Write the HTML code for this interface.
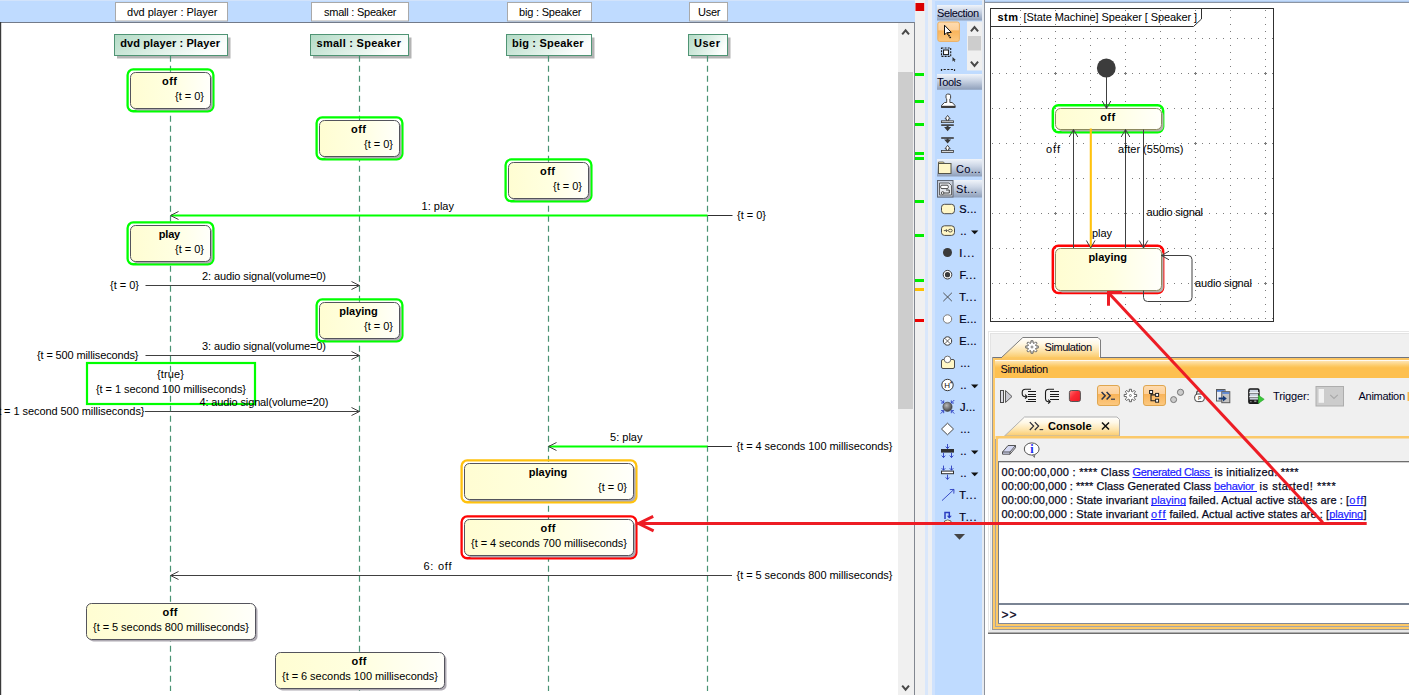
<!DOCTYPE html>
<html><head><meta charset="utf-8"><title>Simulation</title>
<style>html,body{margin:0;padding:0;background:#fff;}body{width:1409px;height:695px;overflow:hidden;font-family:"Liberation Sans",sans-serif;}svg{display:block}text{white-space:pre}</style>
</head><body>
<svg width="1409" height="695" viewBox="0 0 1409 695" font-family="Liberation Sans, sans-serif" font-size="11" fill="#000">
<defs>
<linearGradient id="gState" x1="0" y1="0" x2="1" y2="0"><stop offset="0" stop-color="#fffdd2"/><stop offset="0.5" stop-color="#ffffe0"/><stop offset="1" stop-color="#fffffb"/></linearGradient>
<linearGradient id="gLife" x1="0" y1="0" x2="1" y2="0.35"><stop offset="0" stop-color="#b2dbc5"/><stop offset="1" stop-color="#fcfefd"/></linearGradient>
<linearGradient id="gHdr" x1="0" y1="0" x2="0" y2="1"><stop offset="0" stop-color="#f0f4fa"/><stop offset="0.4" stop-color="#ccd6e6"/><stop offset="1" stop-color="#8e9fba"/></linearGradient>
<linearGradient id="gSel" x1="0" y1="0" x2="0" y2="1"><stop offset="0" stop-color="#fedcb0"/><stop offset="0.42" stop-color="#fdd09a"/><stop offset="0.45" stop-color="#f9b45a"/><stop offset="1" stop-color="#fcc981"/></linearGradient>
<linearGradient id="gTab" x1="0" y1="0" x2="0" y2="1"><stop offset="0" stop-color="#ffffff"/><stop offset="0.3" stop-color="#fff8e6"/><stop offset="0.7" stop-color="#fde2a6"/><stop offset="1" stop-color="#fbcb6c"/></linearGradient>
<linearGradient id="gBand" x1="0" y1="0" x2="0" y2="1"><stop offset="0" stop-color="#fee4b2"/><stop offset="0.3" stop-color="#fdc963"/><stop offset="0.4" stop-color="#fdc050"/><stop offset="1" stop-color="#fdc050"/></linearGradient>
<linearGradient id="gStop" x1="0" y1="0" x2="1" y2="1"><stop offset="0" stop-color="#ff7272"/><stop offset="0.45" stop-color="#fa2a34"/><stop offset="1" stop-color="#ee1822"/></linearGradient>
<radialGradient id="gBall" cx="0.4" cy="0.35" r="0.7"><stop offset="0" stop-color="#b8b8b8"/><stop offset="1" stop-color="#3c3c3c"/></radialGradient>
<pattern id="gridH" x="1020" y="38" width="7" height="35" patternUnits="userSpaceOnUse"><rect x="0" y="0" width="1" height="1" fill="#7c7c7c"/></pattern>
<pattern id="gridV" x="1020" y="38" width="35" height="7" patternUnits="userSpaceOnUse"><rect x="0" y="0" width="1" height="1" fill="#7c7c7c"/></pattern>
</defs>
<rect x="0" y="0" width="1409" height="695" fill="#bfdbff"/>
<rect x="0" y="0" width="985" height="1" fill="#d2e3fb"/>
<rect x="0" y="22" width="898" height="673" fill="#fff"/>
<rect x="0" y="22" width="915" height="1" fill="#737b8a"/>
<rect x="0" y="22" width="1.2" height="673" fill="#3a3a3a"/>
<rect x="115.5" y="2.5" width="112" height="18.5" fill="#fff" stroke="#a9a9a9" stroke-width="1"/>
<text x="127.1" y="15.5" textLength="90.3" lengthAdjust="spacing">dvd player : Player</text>
<rect x="311.5" y="2.5" width="97" height="18.5" fill="#fff" stroke="#a9a9a9" stroke-width="1"/>
<text x="324" y="15.5" textLength="72.5" lengthAdjust="spacing">small : Speaker</text>
<rect x="507.5" y="2.5" width="84" height="18.5" fill="#fff" stroke="#a9a9a9" stroke-width="1"/>
<text x="519" y="15.5" textLength="62.5" lengthAdjust="spacing">big : Speaker</text>
<rect x="689.5" y="2.5" width="38" height="18.5" fill="#fff" stroke="#a9a9a9" stroke-width="1"/>
<text x="698" y="15.5" textLength="22.5" lengthAdjust="spacing">User</text>
<rect x="117" y="37.5" width="113.5" height="21" fill="#b4b4b4"/>
<rect x="114.5" y="34.5" width="113.0" height="21" fill="url(#gLife)" stroke="#4f9474" stroke-width="1"/>
<text x="120.2" y="46.5" font-weight="bold" textLength="99.8" lengthAdjust="spacing">dvd player : Player</text>
<line x1="170.5" y1="55.7" x2="170.5" y2="691" stroke="#4a9373" stroke-width="1.2" stroke-dasharray="6,4"/>
<rect x="313" y="37.5" width="98.5" height="21" fill="#b4b4b4"/>
<rect x="310.5" y="34.5" width="98.0" height="21" fill="url(#gLife)" stroke="#4f9474" stroke-width="1"/>
<text x="316.5" y="46.5" font-weight="bold" textLength="84.5" lengthAdjust="spacing">small : Speaker</text>
<line x1="359.5" y1="55.7" x2="359.5" y2="691" stroke="#4a9373" stroke-width="1.2" stroke-dasharray="6,4"/>
<rect x="509" y="37.5" width="85.5" height="21" fill="#b4b4b4"/>
<rect x="506.5" y="34.5" width="85.0" height="21" fill="url(#gLife)" stroke="#4f9474" stroke-width="1"/>
<text x="512" y="46.5" font-weight="bold" textLength="71.5" lengthAdjust="spacing">big : Speaker</text>
<line x1="548.5" y1="55.7" x2="548.5" y2="691" stroke="#4a9373" stroke-width="1.2" stroke-dasharray="6,4"/>
<rect x="691" y="37.5" width="39.5" height="21" fill="#b4b4b4"/>
<rect x="688.5" y="34.5" width="39.0" height="21" fill="url(#gLife)" stroke="#4f9474" stroke-width="1"/>
<text x="694" y="46.5" font-weight="bold" textLength="26" lengthAdjust="spacing">User</text>
<line x1="707.5" y1="55.7" x2="707.5" y2="691" stroke="#4a9373" stroke-width="1.2" stroke-dasharray="6,4"/>
<line x1="171" y1="215.5" x2="707.5" y2="215.5" stroke="#00ff00" stroke-width="2.2"/>
<line x1="707.5" y1="215.5" x2="732.5" y2="215.5" stroke="#303030" stroke-width="1"/>
<polyline points="178.5,211.5 170.5,215.5 178.5,219.5" fill="none" stroke="#404040" stroke-width="1"/>
<text x="421.5" y="210" textLength="32.5" lengthAdjust="spacing">1: play</text>
<text x="737" y="219" textLength="29" lengthAdjust="spacing">{t = 0}</text>
<line x1="145.5" y1="285.5" x2="359.5" y2="285.5" stroke="#404040" stroke-width="1"/>
<polyline points="351.5,281.5 359.5,285.5 351.5,289.5" fill="none" stroke="#404040" stroke-width="1"/>
<text x="202" y="280" textLength="124" lengthAdjust="spacing">2: audio signal(volume=0)</text>
<text x="110" y="289" textLength="29" lengthAdjust="spacing">{t = 0}</text>
<line x1="145.5" y1="355.5" x2="359.5" y2="355.5" stroke="#404040" stroke-width="1"/>
<polyline points="351.5,351.5 359.5,355.5 351.5,359.5" fill="none" stroke="#404040" stroke-width="1"/>
<text x="202" y="350" textLength="124" lengthAdjust="spacing">3: audio signal(volume=0)</text>
<text x="37" y="359" textLength="101.5" lengthAdjust="spacing">{t = 500 milliseconds}</text>
<rect x="87" y="363" width="168" height="41" fill="none" stroke="#00ff00" stroke-width="2.2"/>
<text x="157" y="378" textLength="27" lengthAdjust="spacing">{true}</text>
<text x="96" y="393" textLength="150" lengthAdjust="spacing">{t = 1 second 100 milliseconds}</text>
<line x1="145" y1="411.5" x2="359.5" y2="411.5" stroke="#404040" stroke-width="1"/>
<polyline points="351.5,407.5 359.5,411.5 351.5,415.5" fill="none" stroke="#404040" stroke-width="1"/>
<text x="199.5" y="406" textLength="129.0" lengthAdjust="spacing">4: audio signal(volume=20)</text>
<text x="-5.5" y="415" textLength="150.0" lengthAdjust="spacing">{t = 1 second 500 milliseconds}</text>
<line x1="549" y1="446.5" x2="707.5" y2="446.5" stroke="#00ff00" stroke-width="2.2"/>
<line x1="707.5" y1="446.5" x2="732" y2="446.5" stroke="#303030" stroke-width="1"/>
<polyline points="556.5,442.5 548.5,446.5 556.5,450.5" fill="none" stroke="#404040" stroke-width="1"/>
<text x="610" y="441" textLength="32.5" lengthAdjust="spacing">5: play</text>
<text x="736.5" y="450" textLength="156.0" lengthAdjust="spacing">{t = 4 seconds 100 milliseconds}</text>
<line x1="170.5" y1="575.5" x2="732" y2="575.5" stroke="#404040" stroke-width="1"/>
<polyline points="178.5,571.5 170.5,575.5 178.5,579.5" fill="none" stroke="#404040" stroke-width="1"/>
<text x="423.5" y="570" textLength="28.0" lengthAdjust="spacing">6: off</text>
<text x="736.5" y="579" textLength="156.0" lengthAdjust="spacing">{t = 5 seconds 800 milliseconds}</text>
<rect x="127.6" y="69.45" width="85.8" height="41.8" rx="5.6" fill="none" stroke="#00ff00" stroke-width="2.3"/>
<rect x="132.5" y="74.5" width="80" height="36" rx="5" fill="#aeaab2"/>
<rect x="130.5" y="72.5" width="80" height="36" rx="5" fill="url(#gState)" stroke="#54545c" stroke-width="1"/>
<text x="162.0" y="85" font-weight="bold" textLength="15.0" lengthAdjust="spacing">off</text>
<text x="175" y="100" textLength="29" lengthAdjust="spacing">{t = 0}</text>
<rect x="316.6" y="117.45" width="85.8" height="41.8" rx="5.6" fill="none" stroke="#00ff00" stroke-width="2.3"/>
<rect x="321.5" y="122.5" width="80" height="36" rx="5" fill="#aeaab2"/>
<rect x="319.5" y="120.5" width="80" height="36" rx="5" fill="url(#gState)" stroke="#54545c" stroke-width="1"/>
<text x="351.0" y="133" font-weight="bold" textLength="15.0" lengthAdjust="spacing">off</text>
<text x="364" y="148" textLength="29" lengthAdjust="spacing">{t = 0}</text>
<rect x="505.6" y="159.45" width="85.8" height="41.8" rx="5.6" fill="none" stroke="#00ff00" stroke-width="2.3"/>
<rect x="510.5" y="164.5" width="80" height="36" rx="5" fill="#aeaab2"/>
<rect x="508.5" y="162.5" width="80" height="36" rx="5" fill="url(#gState)" stroke="#54545c" stroke-width="1"/>
<text x="540.0" y="175" font-weight="bold" textLength="15.0" lengthAdjust="spacing">off</text>
<text x="553" y="190" textLength="29" lengthAdjust="spacing">{t = 0}</text>
<rect x="127.6" y="222.45" width="85.8" height="41.8" rx="5.6" fill="none" stroke="#00ff00" stroke-width="2.3"/>
<rect x="132.5" y="227.5" width="80" height="36" rx="5" fill="#aeaab2"/>
<rect x="130.5" y="225.5" width="80" height="36" rx="5" fill="url(#gState)" stroke="#54545c" stroke-width="1"/>
<text x="158.8" y="238" font-weight="bold" textLength="21.4" lengthAdjust="spacing">play</text>
<text x="175" y="253" textLength="29" lengthAdjust="spacing">{t = 0}</text>
<rect x="316.6" y="299.45" width="85.8" height="41.8" rx="5.6" fill="none" stroke="#00ff00" stroke-width="2.3"/>
<rect x="321.5" y="304.5" width="80" height="36" rx="5" fill="#aeaab2"/>
<rect x="319.5" y="302.5" width="80" height="36" rx="5" fill="url(#gState)" stroke="#54545c" stroke-width="1"/>
<text x="339.25" y="315" font-weight="bold" textLength="38.5" lengthAdjust="spacing">playing</text>
<text x="364" y="330" textLength="29" lengthAdjust="spacing">{t = 0}</text>
<rect x="461.6" y="460.45" width="174.8" height="41.8" rx="5.6" fill="none" stroke="#ffc20e" stroke-width="2.3"/>
<rect x="466.5" y="465.5" width="169" height="36" rx="5" fill="#aeaab2"/>
<rect x="464.5" y="463.5" width="169" height="36" rx="5" fill="url(#gState)" stroke="#54545c" stroke-width="1"/>
<text x="528.75" y="476" font-weight="bold" textLength="38.5" lengthAdjust="spacing">playing</text>
<text x="598" y="491" textLength="29" lengthAdjust="spacing">{t = 0}</text>
<rect x="461.6" y="516.45" width="174.8" height="41.8" rx="5.6" fill="none" stroke="#ff0404" stroke-width="2.3"/>
<rect x="466.5" y="521.5" width="169" height="36" rx="5" fill="#aeaab2"/>
<rect x="464.5" y="519.5" width="169" height="36" rx="5" fill="url(#gState)" stroke="#54545c" stroke-width="1"/>
<text x="540.5" y="532" font-weight="bold" textLength="15.0" lengthAdjust="spacing">off</text>
<text x="471.0" y="547" textLength="156.0" lengthAdjust="spacing">{t = 4 seconds 700 milliseconds}</text>
<rect x="88.5" y="605.5" width="169" height="36" rx="5" fill="#aeaab2"/>
<rect x="86.5" y="603.5" width="169" height="36" rx="5" fill="url(#gState)" stroke="#54545c" stroke-width="1"/>
<text x="162.5" y="616" font-weight="bold" textLength="15.0" lengthAdjust="spacing">off</text>
<text x="93.0" y="631" textLength="156.0" lengthAdjust="spacing">{t = 5 seconds 800 milliseconds}</text>
<rect x="277.5" y="654.5" width="169" height="36" rx="5" fill="#aeaab2"/>
<rect x="275.5" y="652.5" width="169" height="36" rx="5" fill="url(#gState)" stroke="#54545c" stroke-width="1"/>
<text x="351.5" y="665" font-weight="bold" textLength="15.0" lengthAdjust="spacing">off</text>
<text x="282.0" y="680" textLength="156.0" lengthAdjust="spacing">{t = 6 seconds 100 milliseconds}</text>
<rect x="898" y="23" width="16.5" height="672" fill="#f0f0f0"/>
<rect x="898" y="72" width="15" height="337" fill="#cdcdcd"/>
<polyline points="902.2,34.3 905.6,30.3 909,34.3" fill="none" stroke="#484848" stroke-width="2"/>
<polyline points="902.2,685.7 905.6,689.7 909,685.7" fill="none" stroke="#484848" stroke-width="2"/>
<rect x="914" y="22" width="1" height="673" fill="#828790"/>
<rect x="915" y="0" width="10" height="695" fill="#f0f0f0"/>
<rect x="925" y="0" width="3" height="695" fill="#d9e7fb"/>
<rect x="928" y="0" width="4" height="695" fill="#eef0f3"/>
<rect x="932" y="0" width="3" height="695" fill="#cfe2fd"/>
<rect x="915.5" y="3" width="8.7" height="8" fill="#da0000"/>
<rect x="915" y="73" width="9" height="3" fill="#00ee00"/>
<rect x="915" y="100" width="9" height="3" fill="#00ee00"/>
<rect x="915" y="123" width="9" height="3" fill="#00ee00"/>
<rect x="915" y="152" width="9" height="3" fill="#00ee00"/>
<rect x="915" y="157" width="9" height="3" fill="#00ee00"/>
<rect x="915" y="200" width="9" height="3" fill="#00ee00"/>
<rect x="915" y="234" width="9" height="3" fill="#00ee00"/>
<rect x="915" y="279" width="9" height="3" fill="#00ee00"/>
<rect x="915" y="288" width="9" height="3" fill="#ffc000"/>
<rect x="915" y="319" width="9" height="3" fill="#ee0000"/>
<rect x="937" y="5" width="45" height="15.5" fill="url(#gHdr)"/>
<text x="937" y="16.5" fill="#00001c" textLength="42" lengthAdjust="spacing">Selection</text>
<rect x="937.8" y="22" width="21.6" height="19.4" rx="2" fill="url(#gSel)" stroke="#eeb060" stroke-width="1"/>
<path d="M944.5 25.2 L944.5 34.9 L946.7 32.7 L951.3 32.4 Z" fill="#fff" stroke="#111" stroke-width="1" stroke-linejoin="miter"/>
<path d="M947.4 33.4 L950.6 38" fill="none" stroke="#111" stroke-width="1.6" stroke-dasharray="1.5,0.6"/>
<rect x="967" y="21.5" width="15" height="49" fill="#f0f0f0"/>
<rect x="968" y="36" width="13" height="14.5" fill="#cdcdcd"/>
<polyline points="970.9,31.3 974.5,27.1 978.1,31.3" fill="none" stroke="#484848" stroke-width="2"/>
<polyline points="970.9,61.7 974.5,65.9 978.1,61.7" fill="none" stroke="#484848" stroke-width="2"/>
<rect x="941.5" y="48" width="9.2" height="8.4" fill="none" stroke="#1a1a1a" stroke-width="1.1" stroke-dasharray="2,1.1"/>
<rect x="943.5" y="50" width="5" height="4.6" fill="#fff" stroke="#222" stroke-width="1.1"/>
<path d="M952.5 57 L952.5 61.5 L953.8 60.5 L954.6 62 L955.2 61.6 L954.5 60.2 L955.8 60 Z" fill="#333"/>
<path d="M941.5 71 v-1.5 h13 v1.5" fill="none" stroke="#222" stroke-width="1.2" stroke-dasharray="2.2,1.4"/>
<rect x="937" y="74" width="45" height="15.75" fill="url(#gHdr)"/>
<text x="937" y="85.5" fill="#00001c" textLength="24.5" lengthAdjust="spacing">Tools</text>
<path d="M946 98.3 v-2.6 a1.6 1.6 0 0 1 1.6 -1.6 h1.4 a1.6 1.6 0 0 1 1.6 1.6 v2.6 l-0.7 0.6 v3.6 h2.2 l3 2.9 v2.1 h-13.6 v-2.1 l3 -2.9 h2.2 v-3.6 Z" fill="#fff" stroke="#444" stroke-width="1" stroke-linejoin="round"/>
<rect x="941.2" y="105.8" width="14" height="2" fill="#3c3c3c"/>
<path d="M947.6 115.4 l2.6 3.5 h-1.6 v2 h-2 v-2 h-1.6 Z" fill="#fff" stroke="#3a3a3a" stroke-width="0.9" stroke-linejoin="round"/>
<rect x="941.5" y="120.8" width="12" height="1.8" fill="#d8d8d8" stroke="#3a3a3a" stroke-width="0.8"/>
<rect x="941.2" y="124.3" width="12.6" height="1.6" fill="#3a3a3a"/>
<path d="M947.6 131.2 l-3.5 -4.2 h2.5 v-1 h2 v1 h2.5 Z" fill="#3a3a3a"/>
<rect x="941.2" y="137.2" width="12.6" height="1.6" fill="#3a3a3a"/>
<path d="M947.6 143.6 l-3.5 -4.2 h2.5 v-1 h2 v1 h2.5 Z" fill="#3a3a3a"/>
<path d="M947.6 145.3 l2.6 3.5 h-1.6 v2 h-2 v-2 h-1.6 Z" fill="#fff" stroke="#3a3a3a" stroke-width="0.9" stroke-linejoin="round"/>
<rect x="941.5" y="150.5" width="12" height="2" fill="#d8d8d8" stroke="#3a3a3a" stroke-width="0.8"/>
<rect x="937" y="159" width="45" height="17.5" fill="url(#gHdr)"/>
<path d="M938.5 163.5 v-1.5 h5 l1 1.5 Z" fill="#f6e7a6" stroke="#55554a" stroke-width="0.8"/>
<rect x="938.5" y="163.5" width="12.5" height="10" fill="#fff7c8" stroke="#55554a" stroke-width="1"/>
<text x="956" y="172.5" fill="#00001c" textLength="24.5" lengthAdjust="spacing">Co...</text>
<rect x="937" y="180" width="45" height="17.5" fill="url(#gHdr)"/>
<rect x="937.5" y="180.5" width="15.5" height="16.5" fill="#c9d0dc" stroke="#5f6673" stroke-width="1"/>
<path d="M939.5 183 h9.5 l2.5 2.5 v9.5 h-12 Z" fill="#e4e7ec" stroke="#555" stroke-width="0.9"/>
<rect x="940.7" y="185.2" width="7.6" height="3.4" rx="1.2" fill="#fff" stroke="#333" stroke-width="0.9"/>
<path d="M946 190 h3.3 v3 h-6.3 v-1.4" fill="none" stroke="#333" stroke-width="0.9"/>
<circle cx="942.6" cy="193" r="1.3" fill="#fff" stroke="#333" stroke-width="0.8"/>
<text x="956" y="193" fill="#00001c" textLength="21" lengthAdjust="spacing">St...</text>
<rect x="941.5" y="204.3" width="13" height="9.4" rx="3" fill="#fff7c6" stroke="#4a4a4a" stroke-width="1"/>
<text x="959.3" y="213" fill="#00001c" textLength="17.2" lengthAdjust="spacing" stroke="#00001c" stroke-width="0.22">S...</text>
<rect x="941.5" y="225.8" width="13" height="9.6" rx="3" fill="#fff7c6" stroke="#4a4a4a" stroke-width="1"/>
<path d="M943.8 230.6 h3.4 m-1.2 -1.4 l1.4 1.4 l-1.4 1.4" fill="none" stroke="#333" stroke-width="0.8"/>
<ellipse cx="950.3" cy="230.6" rx="1.9" ry="1.4" fill="none" stroke="#333" stroke-width="0.8"/>
<text x="960.2" y="235" fill="#00001c" textLength="6.4" lengthAdjust="spacing" stroke="#00001c" stroke-width="0.22">..</text>
<path d="M971 230.5 h7.4 l-3.7 3.8 Z" fill="#111"/>
<circle cx="947.5" cy="252.5" r="4.5" fill="#3a3a3a"/>
<text x="959.3" y="257" fill="#00001c" textLength="15.0" lengthAdjust="spacing" stroke="#00001c" stroke-width="0.22">I...</text>
<circle cx="947.5" cy="274.7" r="4.3" fill="#fff" stroke="#3a3a3a" stroke-width="1"/>
<circle cx="947.5" cy="274.7" r="2.6" fill="#3a3a3a"/>
<text x="959.5" y="279" fill="#00001c" textLength="16.5" lengthAdjust="spacing" stroke="#00001c" stroke-width="0.22">F...</text>
<path d="M943.3 292.8 l8.6 8.4 m0 -8.4 l-8.6 8.4" fill="none" stroke="#444" stroke-width="0.9"/>
<text x="959.3" y="301" fill="#00001c" textLength="17.2" lengthAdjust="spacing" stroke="#00001c" stroke-width="0.22">T...</text>
<circle cx="947.5" cy="319" r="4.2" fill="#fff" stroke="#7a7a7a" stroke-width="1"/>
<text x="959.3" y="323" fill="#00001c" textLength="17.2" lengthAdjust="spacing" stroke="#00001c" stroke-width="0.22">E...</text>
<circle cx="947.5" cy="341" r="4.2" fill="#fff" stroke="#3a3a3a" stroke-width="1"/>
<path d="M944.6 338.1 l5.8 5.8 m0 -5.8 l-5.8 5.8" fill="none" stroke="#3a3a3a" stroke-width="0.8"/>
<text x="959.3" y="345" fill="#00001c" textLength="17.2" lengthAdjust="spacing" stroke="#00001c" stroke-width="0.22">E...</text>
<rect x="941.5" y="359.5" width="13" height="9" rx="1.5" fill="#fff7c6" stroke="#4a4a4a" stroke-width="1"/>
<circle cx="947.5" cy="359.4" r="3.3" fill="#fff" stroke="#707070" stroke-width="1"/>
<text x="960.3" y="367" fill="#00001c" textLength="9.7" lengthAdjust="spacing" stroke="#00001c" stroke-width="0.22">...</text>
<circle cx="947.5" cy="385" r="5.7" fill="#fff" stroke="#3a3a3a" stroke-width="1"/>
<text x="944.3" y="388" font-size="8" fill="#111">H</text>
<text x="949.8" y="385.5" font-size="7" fill="#111">*</text>
<text x="960.2" y="389" fill="#00001c" textLength="6.4" lengthAdjust="spacing" stroke="#00001c" stroke-width="0.22">..</text>
<path d="M971 384.5 h7.4 l-3.7 3.8 Z" fill="#111"/>
<circle cx="947.5" cy="406.8" r="4.6" fill="url(#gBall)" stroke="#333" stroke-width="0.6"/>
<path d="M940.7 400.0 L943.7 403.0 M941.1 403.0 L943.7 403.0 L943.7 400.4" fill="none" stroke="#2a3cc0" stroke-width="0.9"/>
<path d="M954.3 400.0 L951.3 403.0 M953.9 403.0 L951.3 403.0 L951.3 400.4" fill="none" stroke="#2a3cc0" stroke-width="0.9"/>
<path d="M940.7 413.6 L943.7 410.6 M941.1 410.6 L943.7 410.6 L943.7 413.20000000000005" fill="none" stroke="#2a3cc0" stroke-width="0.9"/>
<path d="M954.3 413.6 L951.3 410.6 M953.9 410.6 L951.3 410.6 L951.3 413.20000000000005" fill="none" stroke="#2a3cc0" stroke-width="0.9"/>
<text x="960" y="411" fill="#00001c" textLength="15.3" lengthAdjust="spacing" stroke="#00001c" stroke-width="0.22">J...</text>
<path d="M947.5 423.2 l6 5.8 l-6 5.8 l-6 -5.8 Z" fill="#fff" stroke="#4a4a4a" stroke-width="1"/>
<text x="960.3" y="433" fill="#00001c" textLength="9.7" lengthAdjust="spacing" stroke="#00001c" stroke-width="0.22">...</text>
<rect x="941" y="449" width="13" height="3.6" fill="#303030"/>
<path d="M947.5 444 L947.5 448.6 M945.7 446.6 L947.5 448.6 L949.3 446.6" fill="none" stroke="#2a3cc0" stroke-width="0.9"/>
<path d="M943.5 452.8 L943.5 457.6 M941.7 455.6 L943.5 457.6 L945.3 455.6" fill="none" stroke="#2a3cc0" stroke-width="0.9"/>
<path d="M951.5 452.8 L951.5 457.6 M949.7 455.6 L951.5 457.6 L953.3 455.6" fill="none" stroke="#2a3cc0" stroke-width="0.9"/>
<text x="960.2" y="455" fill="#00001c" textLength="6.4" lengthAdjust="spacing" stroke="#00001c" stroke-width="0.22">..</text>
<path d="M971 450.5 h7.4 l-3.7 3.8 Z" fill="#111"/>
<rect x="941.5" y="471.1" width="12" height="2.6" fill="#fff" stroke="#303030" stroke-width="1"/>
<path d="M943.5 465.6 L943.5 470.2 M941.7 468.2 L943.5 470.2 L945.3 468.2" fill="none" stroke="#2a3cc0" stroke-width="0.9"/>
<path d="M951.5 465.6 L951.5 470.2 M949.7 468.2 L951.5 470.2 L953.3 468.2" fill="none" stroke="#2a3cc0" stroke-width="0.9"/>
<path d="M947.5 474.6 L947.5 479.4 M945.7 477.4 L947.5 479.4 L949.3 477.4" fill="none" stroke="#2a3cc0" stroke-width="0.9"/>
<text x="960.2" y="477" fill="#00001c" textLength="6.4" lengthAdjust="spacing" stroke="#00001c" stroke-width="0.22">..</text>
<path d="M971 472.5 h7.4 l-3.7 3.8 Z" fill="#111"/>
<path d="M942 500.6 L954 489.4 M949.8 489.6 L954 489.4 L953.8 493.6" fill="none" stroke="#2a3cc0" stroke-width="0.9"/>
<text x="959.3" y="499" fill="#00001c" textLength="17.2" lengthAdjust="spacing" stroke="#00001c" stroke-width="0.22">T...</text>
<path d="M944.5 521 a5 4 0 0 1 6.5 0 v1.5 h-6.5 Z" fill="#fff7c6" stroke="#4a4a4a" stroke-width="0.8"/>
<path d="M945 519 v-6.5 h4.3 v5" fill="none" stroke="#2a3cc0" stroke-width="1.5"/>
<path d="M946.8 515.8 l2.5 2.8 l2.5 -2.8 Z" fill="#2a3cc0"/>
<text x="959.3" y="521" fill="#00001c" textLength="17.2" lengthAdjust="spacing" stroke="#00001c" stroke-width="0.22">T...</text>
<path d="M954 534 h11 l-5.5 5.8 Z" fill="#454545"/>
<rect x="982" y="0" width="2" height="695" fill="#e6ebf2"/>
<rect x="984" y="0" width="1" height="695" fill="#8e939c"/>
<rect x="985" y="2" width="424" height="693" fill="#fff"/>
<rect x="985" y="0" width="424" height="1" fill="#c4dcfb"/>
<rect x="985" y="1" width="424" height="1" fill="#adc8ec"/>
<rect x="984" y="2" width="425" height="1" fill="#8c95a3"/>
<rect x="991" y="9" width="282" height="312" fill="url(#gridH)"/>
<rect x="991" y="9" width="282" height="312" fill="url(#gridV)"/>
<path d="M1054 73.5 h3 M1055.5 72 v3" stroke="#7c7c7c" stroke-width="1" fill="none"/>
<path d="M1054 143.5 h3 M1055.5 142 v3" stroke="#7c7c7c" stroke-width="1" fill="none"/>
<path d="M1054 213.5 h3 M1055.5 212 v3" stroke="#7c7c7c" stroke-width="1" fill="none"/>
<path d="M1054 283.5 h3 M1055.5 282 v3" stroke="#7c7c7c" stroke-width="1" fill="none"/>
<path d="M1124 73.5 h3 M1125.5 72 v3" stroke="#7c7c7c" stroke-width="1" fill="none"/>
<path d="M1124 143.5 h3 M1125.5 142 v3" stroke="#7c7c7c" stroke-width="1" fill="none"/>
<path d="M1124 213.5 h3 M1125.5 212 v3" stroke="#7c7c7c" stroke-width="1" fill="none"/>
<path d="M1124 283.5 h3 M1125.5 282 v3" stroke="#7c7c7c" stroke-width="1" fill="none"/>
<path d="M1194 73.5 h3 M1195.5 72 v3" stroke="#7c7c7c" stroke-width="1" fill="none"/>
<path d="M1194 143.5 h3 M1195.5 142 v3" stroke="#7c7c7c" stroke-width="1" fill="none"/>
<path d="M1194 213.5 h3 M1195.5 212 v3" stroke="#7c7c7c" stroke-width="1" fill="none"/>
<path d="M1194 283.5 h3 M1195.5 282 v3" stroke="#7c7c7c" stroke-width="1" fill="none"/>
<path d="M1264 73.5 h3 M1265.5 72 v3" stroke="#7c7c7c" stroke-width="1" fill="none"/>
<path d="M1264 143.5 h3 M1265.5 142 v3" stroke="#7c7c7c" stroke-width="1" fill="none"/>
<path d="M1264 213.5 h3 M1265.5 212 v3" stroke="#7c7c7c" stroke-width="1" fill="none"/>
<path d="M1264 283.5 h3 M1265.5 282 v3" stroke="#7c7c7c" stroke-width="1" fill="none"/>
<rect x="990.5" y="8.5" width="283" height="313" fill="none" stroke="#303030" stroke-width="1"/>
<path d="M990.5 26.5 H1193.5 L1201.5 19 V8.5" fill="none" stroke="#303030" stroke-width="1"/>
<text x="997.5" y="21" font-weight="bold" textLength="20.5" lengthAdjust="spacing">stm</text>
<text x="1023.5" y="21" textLength="173.5" lengthAdjust="spacing">[State Machine] Speaker [ Speaker ]</text>
<circle cx="1106.3" cy="68" r="9.4" fill="#3c3c3c"/>
<rect x="1052.85" y="105.35" width="110.3" height="27.0" rx="5.5" fill="none" stroke="#00ff00" stroke-width="2.5"/>
<rect x="1057.5" y="110.5" width="106" height="21.0" rx="5" fill="#b4b0ac"/>
<rect x="1055.5" y="108.5" width="106" height="21.0" rx="5" fill="url(#gState)" stroke="#8d8a60" stroke-width="1"/>
<text x="1100.25" y="121" font-weight="bold" textLength="14.8" lengthAdjust="spacing">off</text>
<rect x="1052.85" y="245.65" width="110.3" height="47.29999999999998" rx="5.5" fill="none" stroke="#ff0404" stroke-width="2.5"/>
<rect x="1057.5" y="250.5" width="106" height="42.0" rx="5" fill="#b4b0ac"/>
<rect x="1055.5" y="248.5" width="106" height="42.0" rx="5" fill="url(#gState)" stroke="#8d8a60" stroke-width="1"/>
<text x="1088.4" y="261" font-weight="bold" textLength="38.5" lengthAdjust="spacing">playing</text>
<line x1="1106.5" y1="77" x2="1106.5" y2="108.5" stroke="#404040" stroke-width="1"/>
<polyline points="1102.2,101 1106.5,108.5 1110.8,101" fill="none" stroke="#404040" stroke-width="1"/>
<line x1="1073.5" y1="129.5" x2="1073.5" y2="248" stroke="#404040" stroke-width="1"/>
<polyline points="1069.2,137 1073.5,129.5 1077.8,137" fill="none" stroke="#404040" stroke-width="1"/>
<line x1="1090.8" y1="128.5" x2="1090.8" y2="247" stroke="#ffc20e" stroke-width="2.1"/>
<polyline points="1086.4,240.5 1090.7,248 1095,240.5" fill="none" stroke="#404040" stroke-width="1"/>
<line x1="1125.5" y1="129.5" x2="1125.5" y2="248" stroke="#404040" stroke-width="1"/>
<polyline points="1121.2,137 1125.5,129.5 1129.8,137" fill="none" stroke="#404040" stroke-width="1"/>
<line x1="1143.5" y1="129.5" x2="1143.5" y2="248" stroke="#404040" stroke-width="1"/>
<polyline points="1139.2,240.5 1143.5,248 1147.8,240.5" fill="none" stroke="#404040" stroke-width="1"/>
<path d="M1143.5 290.5 V297.5 a4 4 0 0 0 4 4 H1188 a4 4 0 0 0 4 -4 V259.5 a4 4 0 0 0 -4 -4 H1161.5" fill="none" stroke="#404040" stroke-width="1"/>
<polyline points="1169,251.2 1161.5,255.5 1169,259.8" fill="none" stroke="#404040" stroke-width="1"/>
<text x="1046" y="153" textLength="14" lengthAdjust="spacing">off</text>
<text x="1118" y="153" textLength="65.5" lengthAdjust="spacing">after (550ms)</text>
<text x="1146.5" y="216" textLength="56.5" lengthAdjust="spacing">audio signal</text>
<text x="1092" y="237" textLength="20" lengthAdjust="spacing">play</text>
<text x="1195" y="287" textLength="57" lengthAdjust="spacing">audio signal</text>
<rect x="988" y="331" width="421" height="303" fill="#f0f0f0"/>
<rect x="988" y="331" width="421" height="1" fill="#e6e6e6"/>
<rect x="988" y="332" width="421" height="1" fill="#ffffff"/>
<rect x="990" y="333" width="419" height="1" fill="#e3e3e3"/>
<rect x="988" y="331" width="1" height="303" fill="#e6e6e6"/>
<rect x="989" y="332" width="1" height="301" fill="#ffffff"/>
<rect x="990" y="333" width="1" height="299" fill="#e3e3e3"/>
<path d="M1001.5 357.5 L1022.8 337.5 H1098 L1100.5 340 V357.5 Z" fill="url(#gTab)"/>
<path d="M1099.5 340 V357" fill="none" stroke="#fff" stroke-width="1"/>
<path d="M1001.5 357.5 L1022.8 337.5 H1098 L1100.5 340 V357.5" fill="none" stroke="#7e7e7e" stroke-width="1"/>
<polygon points="1036.08,346.00 1038.21,345.93 1038.21,348.07 1036.08,348.00 1035.59,349.18 1037.14,350.64 1035.64,352.14 1034.18,350.59 1033.00,351.08 1033.07,353.21 1030.93,353.21 1031.00,351.08 1029.82,350.59 1028.36,352.14 1026.86,350.64 1028.41,349.18 1027.92,348.00 1025.79,348.07 1025.79,345.93 1027.92,346.00 1028.41,344.82 1026.86,343.36 1028.36,341.86 1029.82,343.41 1031.00,342.92 1030.93,340.79 1033.07,340.79 1033.00,342.92 1034.18,343.41 1035.64,341.86 1037.14,343.36 1035.59,344.82" fill="#fff" stroke="#505050" stroke-width="0.9" stroke-linejoin="round"/><circle cx="1032" cy="347" r="1" fill="#fff" stroke="#505050" stroke-width="0.7"/>
<text x="1044.5" y="351" fill="#00001c" textLength="47.5" lengthAdjust="spacing">Simulation</text>
<rect x="992" y="357" width="10" height="1" fill="#70747e"/>
<rect x="1100" y="357" width="309" height="1" fill="#70747e"/>
<rect x="1002" y="357" width="98" height="1" fill="#fcc962"/>
<rect x="993" y="358" width="416" height="2" fill="#fbc562"/>
<rect x="995" y="360" width="414" height="1" fill="#fffaf0"/>
<rect x="995" y="361" width="414" height="17" fill="url(#gBand)"/>
<text x="1000.5" y="373" fill="#00001c" textLength="47.5" lengthAdjust="spacing">Simulation</text>
<rect x="1000.5" y="390.5" width="3" height="12" fill="#dcdce4" stroke="#4a4a4a" stroke-width="1"/>
<path d="M1005.5 390.5 L1012 396.5 L1005.5 402.5 Z" fill="#c9c9d2" stroke="#5a5a5a" stroke-width="1"/>
<path d="M1028.3 391.7 h7.6 M1028.3 394.2 h7.6 M1028.3 396.8 h7.6 M1028.3 399.3 h7.6 M1026 401.8 h9.9" stroke="#1a1a1a" stroke-width="1" fill="none" shape-rendering="crispEdges"/>
<path d="M1031 389.3 h-5.6 q-3.2 0 -3.2 3.2 v1 q0 3.2 3.2 3.2 h1.6 m-1.9 -2 l2 2 l-2 2" stroke="#1a1a1a" stroke-width="1.1" fill="none"/>
<path d="M1050.4 391.7 h8.8 M1050.4 394.2 h8.8 M1050.4 396.8 h8.8 M1050.4 399.3 h8.8" stroke="#1a1a1a" stroke-width="1" fill="none" shape-rendering="crispEdges"/>
<path d="M1054 389.3 h-5.3 q-3.2 0 -3.2 3.2 v5.8 q0 3.4 3.2 3.4 h1.4 m-1.9 -2 l2 2 l-2 2" stroke="#1a1a1a" stroke-width="1.1" fill="none"/>
<rect x="1069.4" y="390.5" width="11" height="11" rx="2" fill="url(#gStop)" stroke="#555" stroke-width="1"/>
<rect x="1097.5" y="385.5" width="22" height="20" rx="2.5" fill="url(#gSel)" stroke="#dfa650" stroke-width="1"/>
<path d="M1101.6 392 l3.6 3.8 l-3.6 3.8 M1106.6 392 l3.6 3.8 l-3.6 3.8" stroke="#2c3348" stroke-width="1.5" fill="none"/>
<path d="M1111 399.2 h4" stroke="#2c3348" stroke-width="1.2" fill="none"/>
<polygon points="1134.48,394.50 1136.61,394.43 1136.61,396.57 1134.48,396.50 1133.99,397.68 1135.54,399.14 1134.04,400.64 1132.58,399.09 1131.40,399.58 1131.47,401.71 1129.33,401.71 1129.40,399.58 1128.22,399.09 1126.76,400.64 1125.26,399.14 1126.81,397.68 1126.32,396.50 1124.19,396.57 1124.19,394.43 1126.32,394.50 1126.81,393.32 1125.26,391.86 1126.76,390.36 1128.22,391.91 1129.40,391.42 1129.33,389.29 1131.47,389.29 1131.40,391.42 1132.58,391.91 1134.04,390.36 1135.54,391.86 1133.99,393.32" fill="#fff" stroke="#505050" stroke-width="0.9" stroke-linejoin="round"/>
<circle cx="1130.4" cy="395.5" r="1" fill="#fff" stroke="#505050" stroke-width="0.7"/>
<rect x="1143.5" y="385.5" width="22" height="20" rx="2.5" fill="url(#gSel)" stroke="#dfa650" stroke-width="1"/>
<path d="M1151 393.5 v7.2 h4.6 M1151 394.9 h4.6" stroke="#222" stroke-width="1.1" fill="none"/>
<rect x="1149.6" y="390.5" width="3" height="3" fill="#fff" stroke="#222" stroke-width="1"/>
<rect x="1155.6" y="393.4" width="3" height="3" fill="#fff" stroke="#222" stroke-width="1"/>
<rect x="1155.6" y="399.2" width="3" height="3" fill="#fff" stroke="#222" stroke-width="1"/>
<circle cx="1173.6" cy="399.6" r="3" fill="#cbcbcb" stroke="#6c6c6c" stroke-width="0.9"/>
<circle cx="1180.5" cy="392.3" r="3.1" fill="#cbcbcb" stroke="#6c6c6c" stroke-width="0.9"/>
<path d="M1196.6 394.5 v-1.2 a2.7 2.7 0 0 1 5.4 0 v1.2" fill="none" stroke="#444" stroke-width="1.1"/>
<rect x="1194.7" y="394" width="9.6" height="7.6" rx="3" fill="#fff" stroke="#444" stroke-width="1"/>
<text x="1198" y="400" font-size="5" font-weight="bold" fill="#555">P</text>
<rect x="1216.5" y="389.5" width="8.5" height="11.5" fill="#e8ecf4" stroke="#5a5a5a" stroke-width="1"/>
<rect x="1217" y="390" width="7.5" height="1.8" fill="#4f7fd6"/>
<rect x="1221.8" y="391.7" width="8" height="11" fill="#c4c4c4" stroke="#5a5a5a" stroke-width="1"/>
<rect x="1222.3" y="392.2" width="7" height="1.6" fill="#4f7fd6"/>
<path d="M1218.6 397.4 h4.4 v-2 l3.8 3.1 l-3.8 3.1 v-2 h-4.4 Z" fill="#163a78"/>
<rect x="1248.9" y="389" width="10" height="14.3" rx="1.2" fill="#ccd4e2" stroke="#161616" stroke-width="1.5"/>
<path d="M1249 392.8 h10 M1249 396.8 h10" stroke="#fff" stroke-width="0.9"/>
<path d="M1249 393.6 h10 M1249 397.6 h10" stroke="#3c3c3c" stroke-width="0.6"/>
<rect x="1249" y="399.6" width="10" height="3.6" fill="#1e1e1e"/><rect x="1254.2" y="400.5" width="2.2" height="1.5" fill="#9a9a9a"/><rect x="1250.4" y="401.2" width="1" height="1" fill="#ddd"/>
<path d="M1258.4 395.2 L1264.2 399.3 L1258.4 403.4 Z" fill="#38c838" stroke="#2aa02a" stroke-width="0.6"/>
<text x="1273" y="400" fill="#00001c" textLength="36.5" lengthAdjust="spacing">Trigger:</text>
<rect x="1316" y="386.5" width="27.5" height="19.5" fill="#cccccc" stroke="#adadad" stroke-width="1"/>
<rect x="1318.6" y="389" width="5.4" height="13.8" fill="#f2f2f2"/>
<polyline points="1330.2,394.8 1334,398.4 1337.8,394.8" fill="none" stroke="#a8a8a8" stroke-width="1.1"/>
<text x="1358.6" y="400" fill="#00001c" textLength="46.4" lengthAdjust="spacing">Animation</text>
<rect x="1407.5" y="392" width="2" height="9" fill="#f5b54a"/>
<path d="M1004.5 436 L1024.5 417 H1117 L1119.5 419.5 V436 Z" fill="url(#gTab)" stroke="#b2b2b2" stroke-width="1"/>
<path d="M1029.8 422.2 l3.8 3.9 l-3.8 3.9 M1034.8 422.2 l3.8 3.9 l-3.8 3.9" stroke="#2a2a36" stroke-width="1.2" fill="none"/>
<path d="M1039.6 429.6 h3.6" stroke="#2a2a36" stroke-width="1.1" fill="none"/>
<text x="1048" y="430" font-weight="bold" textLength="43.5" lengthAdjust="spacing">Console</text>
<path d="M1102 422.5 l7 7 m0 -7 l-7 7" stroke="#111" stroke-width="1.5" fill="none"/>
<rect x="995.5" y="436" width="413.5" height="3" fill="#fbc96a"/>
<rect x="998.5" y="438.5" width="411" height="22.5" fill="#f0f0f0"/>
<path d="M1002.5 452 l5.5 -6.5 h7.5 l-5.5 6.5 Z M1002.5 452 v2.2 h7.5 v-2.2 M1010 454.2 l5.5 -6.5 v-2.2" fill="#d4d8f2" stroke="#444" stroke-width="0.9" stroke-linejoin="round"/>
<path d="M1032.6 455 l1.8 2.4 l0.4 -3.2" fill="#fff" stroke="#555" stroke-width="0.8"/>
<ellipse cx="1031.7" cy="449" rx="7.4" ry="6.1" fill="#fff" stroke="#555" stroke-width="1"/>
<text x="1031.8" y="453" font-size="12" font-weight="bold" text-anchor="middle" fill="#1a2af0" font-family="Liberation Serif, serif">i</text>
<rect x="998.5" y="461.5" width="411" height="142" fill="#fff"/>
<rect x="998" y="461" width="411" height="1.3" fill="#6e6e6e"/>
<text x="1001.5" y="476" fill="#08081c" textLength="128.0" lengthAdjust="spacing" stroke="#08081c" stroke-width="0.25">00:00:00,000 : **** Class</text>
<text x="1132.5" y="476" fill="#1a1aff" textLength="77.5" lengthAdjust="spacing" stroke="#1a1aff" stroke-width="0.2">Generated Class</text>
<rect x="1132.5" y="477" width="77.5" height="1" fill="#1a1aff"/>
<rect x="1210" y="477" width="2.5" height="1" fill="#1a1aff"/>
<text x="1214.5" y="476" fill="#08081c" textLength="84.1" lengthAdjust="spacing" stroke="#08081c" stroke-width="0.25">is initialized. ****</text>
<text x="1001.5" y="490" fill="#08081c" textLength="209.5" lengthAdjust="spacing" stroke="#08081c" stroke-width="0.25">00:00:00,000 : **** Class Generated Class</text>
<text x="1214" y="490" fill="#1a1aff" textLength="40.5" lengthAdjust="spacing" stroke="#1a1aff" stroke-width="0.2">behavior</text>
<rect x="1214" y="491" width="40.5" height="1" fill="#1a1aff"/>
<rect x="1254" y="491" width="3" height="1" fill="#1a1aff"/>
<text x="1259.5" y="490" fill="#08081c" textLength="76.2" lengthAdjust="spacing" stroke="#08081c" stroke-width="0.25">is started! ****</text>
<text x="1001.5" y="504" fill="#08081c" textLength="146.5" lengthAdjust="spacing" stroke="#08081c" stroke-width="0.25">00:00:00,000 : State invariant</text>
<text x="1151" y="504" fill="#1a1aff" textLength="35" lengthAdjust="spacing" stroke="#1a1aff" stroke-width="0.2">playing</text>
<rect x="1151" y="505" width="35" height="1" fill="#1a1aff"/>
<text x="1189" y="504" fill="#08081c" textLength="160" lengthAdjust="spacing" stroke="#08081c" stroke-width="0.25">failed. Actual active states are : [</text>
<text x="1349.3" y="504" fill="#1a1aff" textLength="14.1" lengthAdjust="spacing" stroke="#1a1aff" stroke-width="0.2">off</text>
<rect x="1349.3" y="505" width="14.100000000000136" height="1" fill="#1a1aff"/>
<text x="1363.6" y="504" fill="#08081c" textLength="2.9" lengthAdjust="spacing" stroke="#08081c" stroke-width="0.25">]</text>
<text x="1001.5" y="518" fill="#08081c" textLength="146.5" lengthAdjust="spacing" stroke="#08081c" stroke-width="0.25">00:00:00,000 : State invariant</text>
<text x="1151" y="518" fill="#1a1aff" textLength="14.5" lengthAdjust="spacing" stroke="#1a1aff" stroke-width="0.2">off</text>
<rect x="1151" y="519" width="14.5" height="1" fill="#1a1aff"/>
<rect x="1165" y="519" width="1.5" height="1" fill="#1a1aff"/>
<text x="1169.5" y="518" fill="#08081c" textLength="159.5" lengthAdjust="spacing" stroke="#08081c" stroke-width="0.25">failed. Actual active states are : [</text>
<text x="1329.3" y="518" fill="#1a1aff" textLength="33.9" lengthAdjust="spacing" stroke="#1a1aff" stroke-width="0.2">playing</text>
<rect x="1329.3" y="519" width="33.90000000000009" height="1" fill="#1a1aff"/>
<text x="1363.6" y="518" fill="#08081c" textLength="2.9" lengthAdjust="spacing" stroke="#08081c" stroke-width="0.25">]</text>
<rect x="998" y="603" width="411" height="2" fill="#7a8494"/>
<rect x="999" y="605" width="410" height="18" fill="#fff"/>
<text x="1001.6" y="618.5" font-size="12" fill="#08081c" textLength="14.9" lengthAdjust="spacing" stroke="#08081c" stroke-width="0.3">&gt;&gt;</text>
<rect x="988" y="630" width="421" height="2.6" fill="#e8e8e8"/>
<rect x="988" y="632.5" width="421" height="1.5" fill="#6e6e6e"/>
<rect x="992" y="357" width="1" height="273" fill="#9a9a9a"/>
<rect x="992" y="629" width="417" height="1" fill="#9a9a9a"/>
<rect x="993" y="358" width="2" height="271" fill="#fdc968"/>
<rect x="993" y="627" width="416" height="2" fill="#fdc968"/>
<rect x="995" y="439" width="1" height="188" fill="#a6a6a6"/>
<rect x="995" y="626" width="414" height="1" fill="#a6a6a6"/>
<rect x="996" y="436" width="2" height="190" fill="#fdc968"/>
<rect x="996" y="624" width="413" height="2" fill="#fdc968"/>
<rect x="998" y="461" width="1" height="163" fill="#747c86"/>
<rect x="998" y="623" width="411" height="1" fill="#80889a"/>
<line x1="636" y1="523.5" x2="1366.7" y2="523.5" stroke="#ed1c24" stroke-width="3"/>
<polyline points="653.2,516.3 638.4,523.5 653.6,530.9" fill="none" stroke="#ed1c24" stroke-width="3" stroke-linejoin="bevel"/>
<line x1="1108.7" y1="293" x2="1322.8" y2="522.5" stroke="#ed1c24" stroke-width="3"/>
<polyline points="1108.5,305.7 1108.5,292.5 1122,292.5" fill="none" stroke="#ed1c24" stroke-width="3" stroke-linejoin="miter"/>
</svg>
</body></html>
